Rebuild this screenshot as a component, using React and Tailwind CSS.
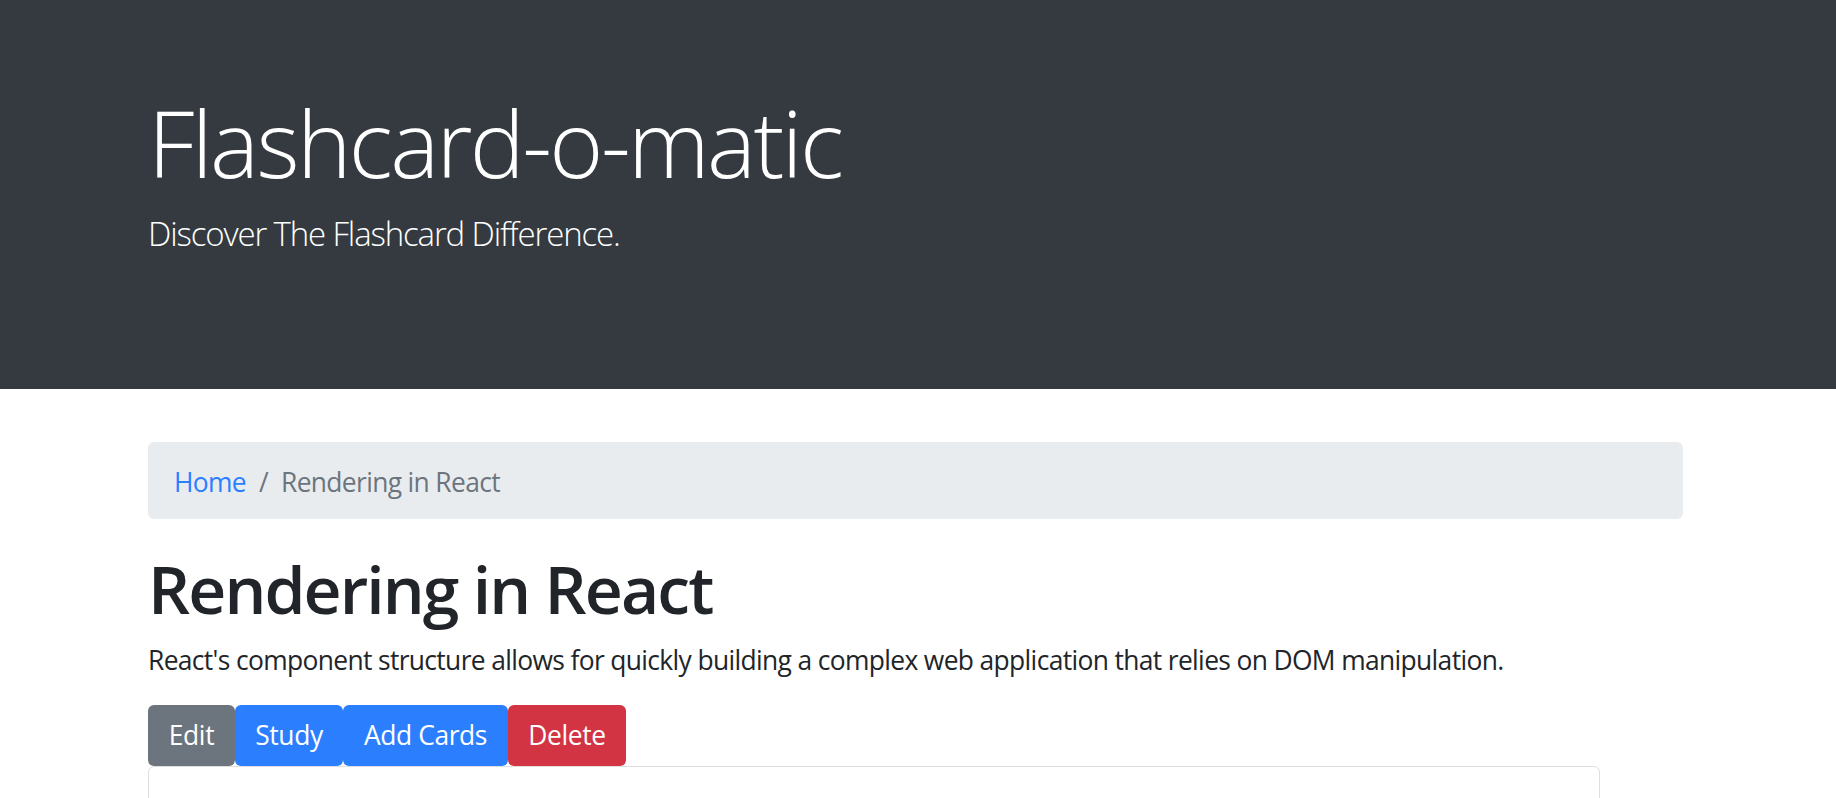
export default function App() {
  const font = "font-['Open_Sans','Noto_Sans',sans-serif]";
  return (
    <div className={`${font} min-h-[798px] bg-white text-[#212529]`}>
      <header className="h-[389px] bg-[#343a40] px-[148px] pt-[87px] text-white">
        <h1 className="text-[92.4px] font-light leading-[111px] tracking-[-2.6px]">Flashcard-o-matic</h1>
        <p className="mt-[11px] text-[33px] font-light leading-[49.5px] tracking-[-1.15px]">Discover The Flashcard Difference.</p>
      </header>
      <main className="px-[148px] pt-[53px]">
        <nav className="flex h-[77px] w-[1535px] items-start rounded-[6px] bg-[#e9ecef] px-[26px] pt-[21px] text-[26.4px] leading-[39.6px] tracking-[-0.65px]">
          <span className="text-[#2b7fff]">Home</span>
          <span className="px-[13px] text-[#6c757d]">/</span>
          <span className="text-[#6c757d]">Rendering in React</span>
        </nav>
        <h2 className="mt-[30px] text-[66px] font-semibold leading-[79.2px] tracking-[-1.9px] text-[#212529]">Rendering in React</h2>
        <p className="mt-[13px] text-[26.4px] leading-[39.6px] tracking-[-0.64px]">
          React's component structure allows for quickly building a complex web application that relies on DOM manipulation.
        </p>
        <div className="mt-[24px] flex tracking-[-0.4px]">
          <button className="flex h-[61.5px] w-[87px] items-center justify-center rounded-[6px] bg-[#6c757d] text-[26.4px] text-white">Edit</button>
          <button className="flex h-[61.5px] w-[108px] items-center justify-center rounded-[6px] bg-[#2b7fff] text-[26.4px] text-white">Study</button>
          <button className="flex h-[61.5px] w-[165px] items-center justify-center rounded-[6px] bg-[#2b7fff] text-[26.4px] text-white">Add Cards</button>
          <button className="flex h-[61.5px] w-[118px] items-center justify-center rounded-[6px] bg-[#d33444] text-[26.4px] text-white">Delete</button>
        </div>
        <div className="h-[200px] w-[1452px] rounded-[6px] border border-[#dfdfdf]"></div>
      </main>
    </div>
  );
}
